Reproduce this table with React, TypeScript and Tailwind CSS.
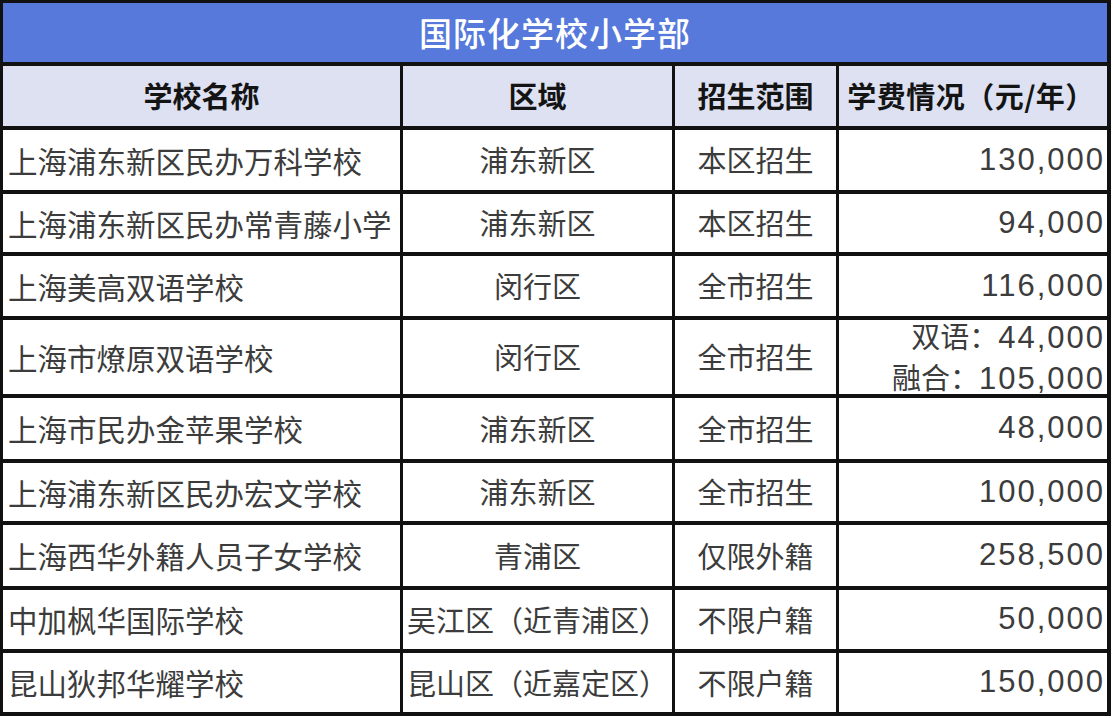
import React from "react";

const Num = ({ v }: { v: string }) => (
  <span className="font-['Liberation_Sans',sans-serif] text-[31px] tracking-[2px] mr-[-2px]">{v}</span>
);

const rows: { name: string; area: string; scope: string; fee: React.ReactNode }[] = [
  { name: "上海浦东新区民办万科学校", area: "浦东新区", scope: "本区招生", fee: <Num v="130,000" /> },
  { name: "上海浦东新区民办常青藤小学", area: "浦东新区", scope: "本区招生", fee: <Num v="94,000" /> },
  { name: "上海美高双语学校", area: "闵行区", scope: "全市招生", fee: <Num v="116,000" /> },
  {
    name: "上海市燎原双语学校",
    area: "闵行区",
    scope: "全市招生",
    fee: (
      <div className="flex flex-col items-end leading-[39px]">
        <span>双语：<Num v="44,000" /></span>
        <span>融合：<Num v="105,000" /></span>
      </div>
    ),
  },
  { name: "上海市民办金苹果学校", area: "浦东新区", scope: "全市招生", fee: <Num v="48,000" /> },
  { name: "上海浦东新区民办宏文学校", area: "浦东新区", scope: "全市招生", fee: <Num v="100,000" /> },
  { name: "上海西华外籍人员子女学校", area: "青浦区", scope: "仅限外籍", fee: <Num v="258,500" /> },
  { name: "中加枫华国际学校", area: "吴江区（近青浦区）", scope: "不限户籍", fee: <Num v="50,000" /> },
  { name: "昆山狄邦华耀学校", area: "昆山区（近嘉定区）", scope: "不限户籍", fee: <Num v="150,000" /> },
];

export default function App() {
  return (
    <div className="w-[1113px] h-[718px] bg-white overflow-hidden font-['Noto_Sans_CJK_SC','Noto_Sans',sans-serif]">
      <div className="w-[1111px] bg-[#111111] pt-[3px] pl-[3px] pr-[4px] pb-[4px] grid grid-cols-[397px_269px_161px_268px] gap-x-[3px] gap-y-[4px] grid-rows-[59px_60px_60px_58px_60px_74px_61px_58px_61px_59px_59px]">
        <div className="col-span-4 bg-[#5679db] flex items-center justify-center text-white text-[33px] font-medium tracking-[1px]">
          国际化学校小学部
        </div>
        <div className="bg-[#dde1f1] flex items-center justify-center text-[29px] font-bold text-[#141414]">学校名称</div>
        <div className="bg-[#dde1f1] flex items-center justify-center text-[29px] font-bold text-[#141414]">区域</div>
        <div className="bg-[#dde1f1] flex items-center justify-center text-[29px] font-bold text-[#141414]">招生范围</div>
        <div className="bg-[#dde1f1] flex items-center justify-center pr-[4px] text-[29px] font-bold text-[#141414] whitespace-nowrap tracking-[0.5px]">学费情况（元/年）</div>
        {rows.map((r, i) => (
          <React.Fragment key={i}>
            <div className="bg-white flex items-center pl-[5px] text-[29.5px] text-[#3c3c3c] whitespace-nowrap overflow-hidden">{r.name}</div>
            <div className="bg-white flex items-center justify-center text-[29px] text-[#3c3c3c] whitespace-nowrap">{r.area}</div>
            <div className="bg-white flex items-center justify-center text-[29px] text-[#3c3c3c] whitespace-nowrap">{r.scope}</div>
            <div className="bg-white flex items-center justify-end pr-[4px] text-[29px] text-[#3c3c3c] whitespace-nowrap">{r.fee}</div>
          </React.Fragment>
        ))}
      </div>
    </div>
  );
}
